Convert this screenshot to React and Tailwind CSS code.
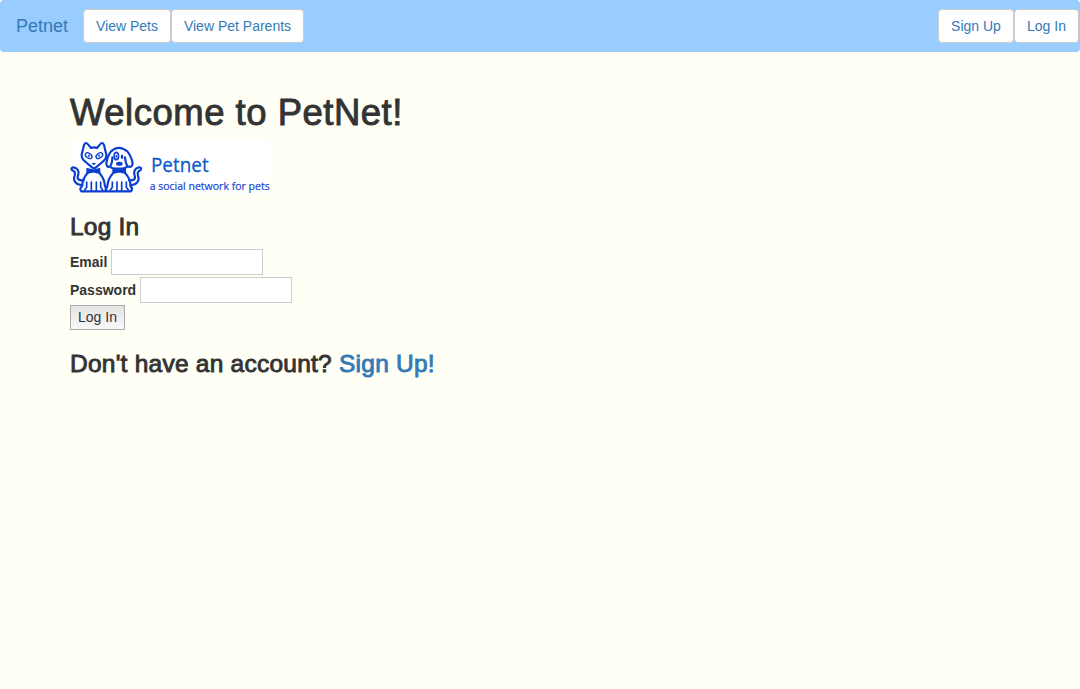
import React from "react";

const font = "font-['Liberation_Sans',Arial,sans-serif]";
const heading = "m-0 whitespace-nowrap font-normal text-[#333] [-webkit-text-stroke:0.9px_currentColor]";

function NavButton({ children, className }) {
  return (
    <a
      href="#"
      className={`flex h-[34px] items-center justify-center whitespace-nowrap rounded border border-[#ccc] bg-white text-sm text-[#337ab7] ${className}`}
    >
      {children}
    </a>
  );
}

function Logo() {
  return (
    <svg className="block h-[54px] w-[200px] bg-white" viewBox="12 12 600 162" role="img">
      <g fill="none" stroke="#0b3fd0" strokeWidth="6.5" strokeLinecap="round" strokeLinejoin="round">
        {/* cat */}
        <path d="M47 56 L54 27 Q59 16 66 25 L75 36 Q84 32 93 36 L102 25 Q109 16 114 27 L121 56 Q122 69 109 78 L90 94 Q84 99 78 94 L59 78 Q46 69 47 56 Z" />
        <ellipse cx="68" cy="59" rx="11" ry="7" transform="rotate(35 68 59)" strokeWidth="4" />
        <ellipse cx="100" cy="59" rx="11" ry="7" transform="rotate(-35 100 59)" strokeWidth="4" />
        <path d="M69 57 v5 M99 57 v5" strokeWidth="4" />
        <path d="M80 82 h8 l-4 4 Z" fill="#0b3fd0" strokeWidth="3" />
        <path d="M63 98 L78 102 H86 L101 98 V112 L86 108 H78 L63 112 Z" fill="#0b3fd0" strokeWidth="4" />
        <path d="M64 112 Q50 128 48 151 Q39 158 46 166 H118 Q124 158 117 151 Q115 128 101 112" />
        <path d="M62 138 V154 L56 162 M76 138 V164 M91 138 V164 M104 138 V154 L110 162" strokeWidth="5" />
        <path d="M49 147 C29 148 20 133 26 119 C29 109 25 105 19 103 C14 99 17 93 23 94 C36 96 40 107 36 119 C32 130 40 134 53 133" />
        {/* dog */}
        <path d="M135 46 Q158 25 184 46 Q196 60 200 82 Q198 97 185 91 Q179 84 177 64 M135 46 Q124 60 121 82 Q123 97 132 91 Q139 83 139 64 M132 91 Q137 98 149 98 H168 Q178 97 185 91" />
        <ellipse cx="151" cy="60" rx="6.5" ry="11" strokeWidth="5" />
        <path d="M151 59 v4" strokeWidth="4" />
        <path d="M168 60 v5" strokeWidth="7" />
        <ellipse cx="160" cy="83" rx="8" ry="4" fill="#0b3fd0" strokeWidth="4" />
        <path d="M141 98 L155 102 H163 L178 98 V112 L163 108 H155 L141 112 Z" fill="#0b3fd0" strokeWidth="4" />
        <path d="M141 112 Q126 128 124 151 Q116 158 122 166 H195 Q202 158 194 151 Q193 128 178 112" />
        <path d="M139 138 V154 L133 162 M153 138 V164 M167 138 V164 M181 138 V154 L187 162" strokeWidth="5" />
        <path d="M193 147 C213 148 222 133 216 119 C213 109 217 105 223 103 C228 99 225 93 219 94 C206 96 202 107 206 119 C210 130 202 134 189 133" />
      </g>
      <text x="255" y="107" textLength="173" lengthAdjust="spacingAndGlyphs" fill="#0b5bc8" stroke="#0b5bc8" strokeWidth="0.8" fontSize="58" className="font-['Open_Sans','Noto_Sans',sans-serif]">Petnet</text>
      <text x="251" y="163" textLength="360" lengthAdjust="spacingAndGlyphs" fill="#1746d2" stroke="#1746d2" strokeWidth="0.6" fontSize="32" className="font-['Open_Sans','Noto_Sans',sans-serif]">a social network for pets</text>
    </svg>
  );
}

export default function App() {
  return (
    <div className={`flex min-h-screen flex-col bg-[#fffff6] text-sm text-[#333] ${font}`}>
      <nav className="flex h-[52px] items-center rounded bg-[#99ccff] pl-4 pr-px">
        <a href="#" className="w-[67px] text-lg text-[#337ab7]">Petnet</a>
        <NavButton className="w-[88px]">View Pets</NavButton>
        <NavButton className="w-[133px]">View Pet Parents</NavButton>
        <div className="ml-auto flex">
          <NavButton className="w-[76px]">Sign Up</NavButton>
          <NavButton className="w-[65px]">Log In</NavButton>
        </div>
      </nav>
      <main className="flex flex-col items-start pl-[70px] pt-[41px]">
        <h1 className={`${heading} h-[47px] text-[36.5px] leading-10 tracking-[0.5px]`}>Welcome to PetNet!</h1>
        <Logo />
        <h2 className={`${heading} mt-5 h-[35px] text-[24.5px] leading-[26px] tracking-[0.2px]`}>Log In</h2>
        <form className="flex flex-col items-start">
          <div className="flex h-7 items-start gap-1">
            <label htmlFor="email" className="w-[37px] whitespace-nowrap font-bold leading-[26px]">Email</label>
            <input id="email" type="email" className="h-[26px] w-[152px] border border-[#ccc] bg-white px-1 outline-none" />
          </div>
          <div className="flex h-7 items-start gap-1">
            <label htmlFor="password" className="w-[66px] whitespace-nowrap font-bold leading-[26px]">Password</label>
            <input id="password" type="password" className="h-[26px] w-[152px] border border-[#ccc] bg-white px-1 outline-none" />
          </div>
          <button type="button" className="flex h-[25px] w-[55px] items-start justify-center whitespace-nowrap border border-[#aaa] bg-linear-to-b from-[#e3e3e3] to-[#f8f8f8] leading-[22px]">Log In</button>
        </form>
        <h3 className={`${heading} mt-[21px] text-[24.5px] leading-[26px] tracking-[0.24px]`}>
          Don't have an account? <a href="#" className="text-[#337ab7]">Sign Up!</a>
        </h3>
      </main>
    </div>
  );
}
